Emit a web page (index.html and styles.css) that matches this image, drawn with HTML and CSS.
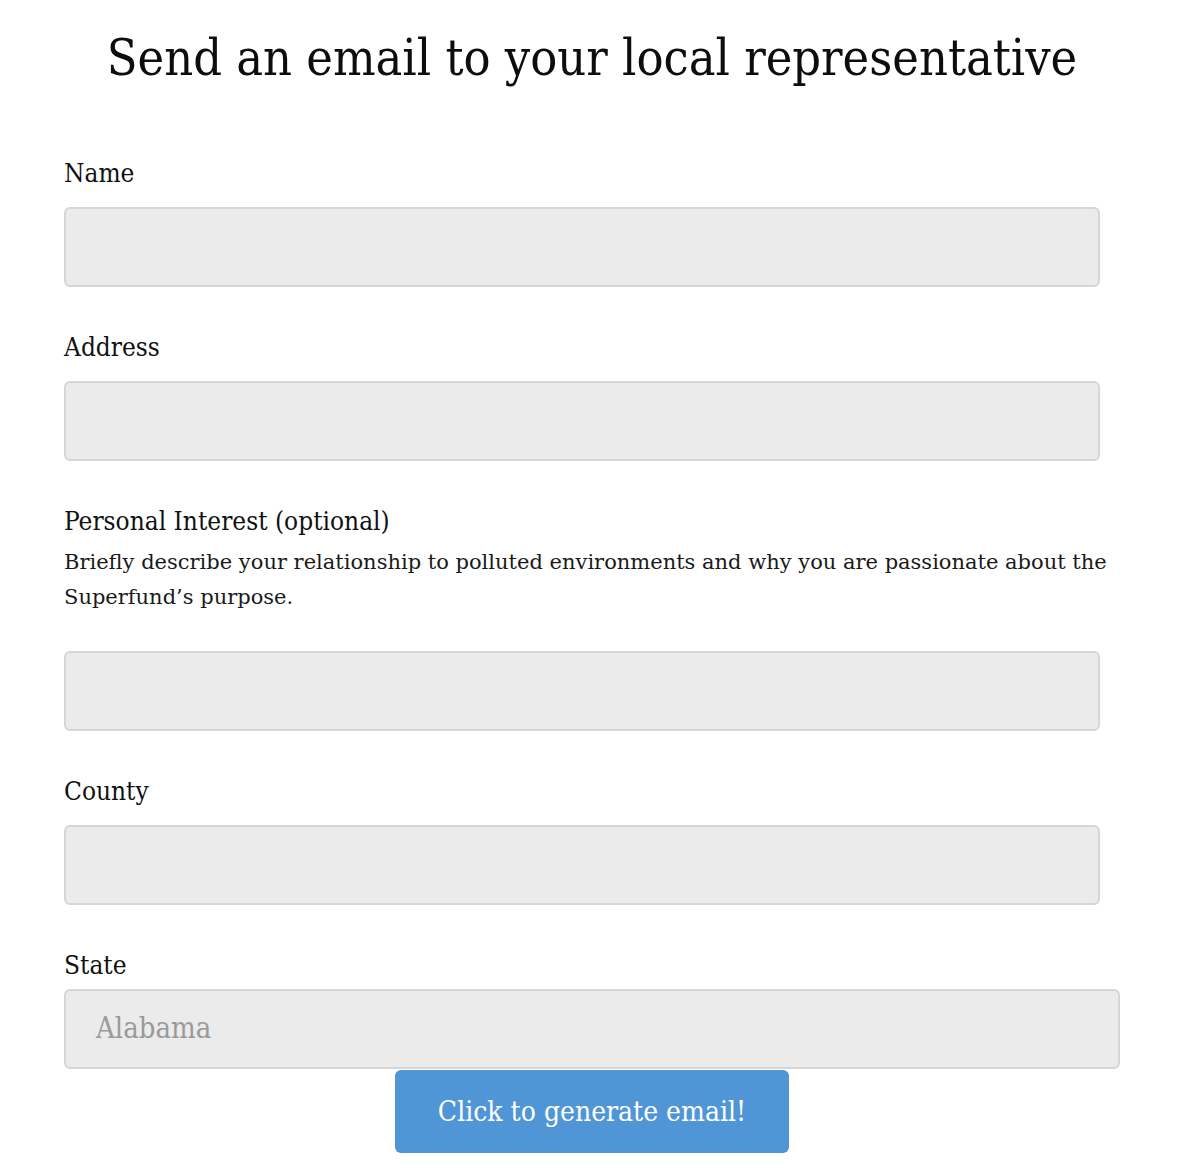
FILE: index.html
```html
<!DOCTYPE html>
<html>
<head>
<meta charset="utf-8">
<link rel="stylesheet" href="styles.css">
</head>
<body>
<div class="page">
  <h1 class="title">Send an email to your local representative</h1>
  <form class="form">
    <div class="field first">
      <label class="label">Name</label>
      <div class="input"></div>
    </div>
    <div class="field">
      <label class="label">Address</label>
      <div class="input"></div>
    </div>
    <div class="field">
      <label class="label">Personal Interest (optional)</label>
      <p class="desc">Briefly describe your relationship to polluted environments and why you are passionate about the Superfund’s purpose.</p>
      <div class="input gap-desc"></div>
    </div>
    <div class="field">
      <label class="label">County</label>
      <div class="input"></div>
    </div>
    <div class="field">
      <label class="label label-state">State</label>
      <div class="select">Alabama</div>
    </div>
    <div class="actions">
      <button type="button" class="button">Click to generate email!</button>
    </div>
  </form>
</div>
</body>
</html>
```

FILE: styles.css
```css
html, body {
  margin: 0;
  padding: 0;
  background: #ffffff;
}
body {
  font-family: "DejaVu Serif Condensed", "DejaVu Serif", serif;
  font-stretch: condensed;
  color: #111;
}
.page {
  width: 1056px;
  margin-left: 64px;
}
.title {
  margin: 0;
  padding-top: 26px;
  font-size: 50px;
  line-height: 64px;
  font-weight: normal;
  text-align: center;
  color: #0d0d0d;
}
.form {
  display: flex;
  flex-direction: column;
}
.field {
  display: flex;
  flex-direction: column;
  margin-top: 45px;
}
.field.first {
  margin-top: 68px;
}
.label {
  font-size: 26px;
  line-height: 30px;
  margin-bottom: 19px;
}
.label-state {
  margin-bottom: 9px;
}
.desc {
  margin: -10px 0 0;
  font-family: "DejaVu Serif", serif;
  font-stretch: normal;
  font-size: 21px;
  line-height: 35px;
  color: #1a1a1a;
}
.input.gap-desc {
  margin-top: 36px;
}
.input {
  width: 1036px;
  height: 80px;
  box-sizing: border-box;
  background: #ebebeb;
  border: 2px solid #d6d6d6;
  border-radius: 6px;
}
.select {
  width: 1056px;
  height: 80px;
  box-sizing: border-box;
  background: #ebebeb;
  border: 2px solid #d6d6d6;
  border-radius: 6px;
  padding-left: 30px;
  font-size: 29px;
  line-height: 74px;
  color: #9a9a9a;
}
.actions {
  display: flex;
  justify-content: center;
  margin-top: 1px;
}
.button {
  width: 394px;
  height: 83px;
  border: none;
  border-radius: 6px;
  background: #5096d6;
  color: #ffffff;
  font-family: inherit;
  font-stretch: condensed;
  font-size: 28px;
  padding: 0;
}
```
